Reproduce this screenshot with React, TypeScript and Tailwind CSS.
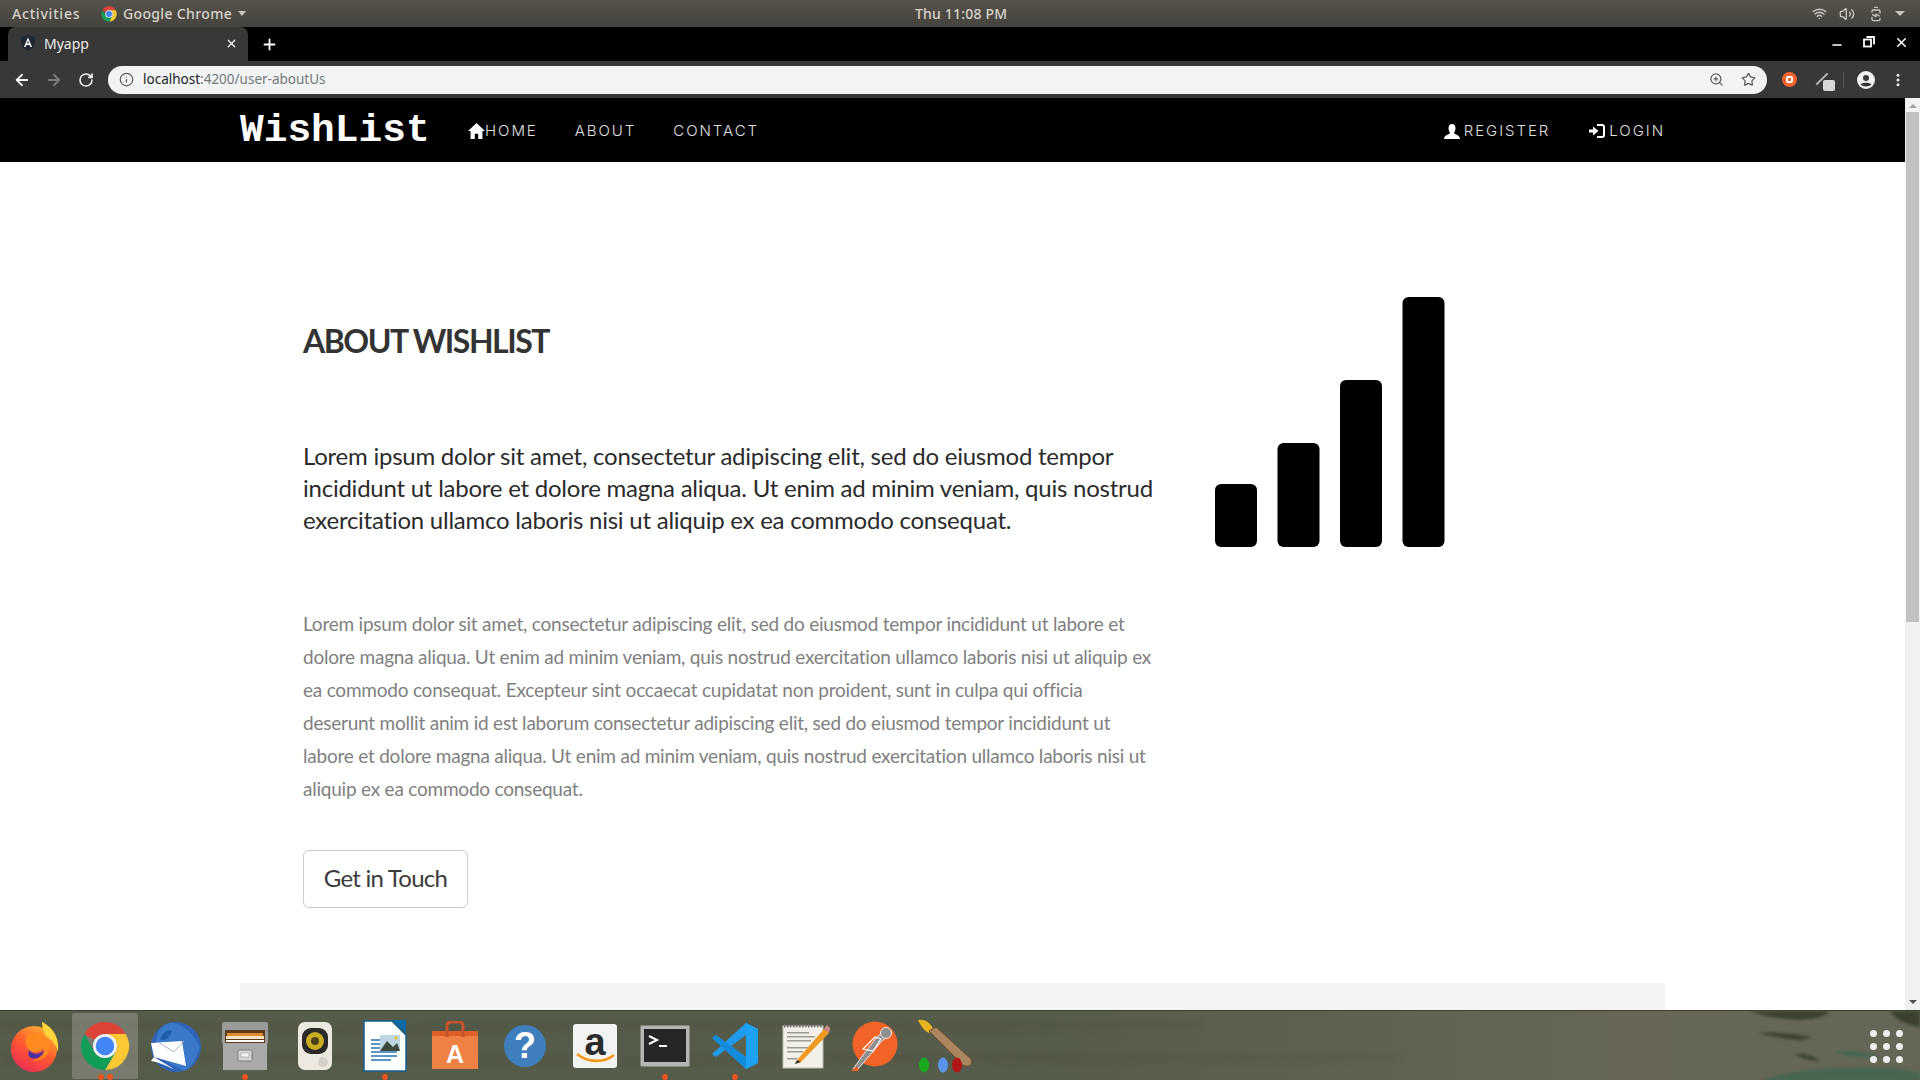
import React from "react";
import { ArrowLeft, ArrowRight, RotateCw, Info, ZoomIn, Star, X, Plus, Minus, EllipsisVertical, Wifi, Volume2, BatteryCharging } from "lucide-react";

function ChromeLogo({ size }: { size: number }) {
  return (
    <svg width={size} height={size} viewBox="0 0 100 100">
      <path d="M50 2A48 48 0 0 1 91.6 26H50A24 24 0 0 0 29 38L8.4 26A48 48 0 0 1 50 2Z" fill="#db4437" />
      <path d="M91.6 26A48 48 0 0 1 50 98L71 62A24 24 0 0 0 71 38L50 26Z" fill="#fcc934" />
      <path d="M8.4 26L29 62A24 24 0 0 0 50 74L50 74L71 62L50 98A48 48 0 0 1 8.4 26Z" fill="#0f9d58" />
      <circle cx="50" cy="50" r="24" fill="#f1f3f4" />
      <circle cx="50" cy="50" r="18.5" fill="#4285f4" />
    </svg>
  );
}

function Firefox() {
  return (
    <svg width="52" height="52" viewBox="0 0 52 52">
      <defs>
        <linearGradient id="ff" x1="0.8" y1="0" x2="0.2" y2="1">
          <stop offset="0" stopColor="#ffb52e" />
          <stop offset="0.5" stopColor="#ff5a2e" />
          <stop offset="1" stopColor="#ec2a5a" />
        </linearGradient>
      </defs>
      <circle cx="25" cy="29" r="23" fill="url(#ff)" />
      <path d="M33 2C42 6 51 16 49 32C47 24 42 19 37 16C34 11 33 6 33 2Z" fill="#ffd43b" />
      <path d="M18 16C26 9 38 14 41 26C41 36 32 42 23 41C32 39 37 34 34 28C30 34 20 33 18 27C15 22 17 19 18 16Z" fill="#ff8a1f" />
      <path d="M20 30C24 35 30 35 35 30C34 36 28 40 22 38C19 36 19 33 20 30Z" fill="#4a2fa0" />
    </svg>
  );
}

function Thunderbird() {
  return (
    <svg width="54" height="54" viewBox="0 0 54 54">
      <circle cx="28" cy="28" r="25" fill="#2f63b8" />
      <path d="M8 24C8 10 18 2 26 4C34 6 44 12 52 28C48 42 42 50 36 52L10 38Z" fill="#3a78c8" />
      <path d="M12 20C15 12 22 10 24 12C22 18 16 24 12 20Z" fill="#1c5ea8" />
      <path d="M3 24L34 22L38 47L6 38Z" fill="#ffffff" />
      <path d="M10 23L26 33L36 22" fill="none" stroke="#a8b4c0" strokeWidth="1" />
      <path d="M3 42C14 44 20 48 26 50L6 38Z" fill="#ffffff" />
    </svg>
  );
}

function FileCabinet() {
  return (
    <svg width="48" height="50" viewBox="0 0 48 50">
      <rect x="1" y="1" width="46" height="22" rx="2" fill="#9a9a9a" />
      <rect x="4" y="9" width="40" height="13" fill="#5c3a1c" />
      <rect x="6" y="12" width="36" height="3" fill="#e08a30" />
      <rect x="5" y="15" width="38" height="3" fill="#f6e2c0" />
      <rect x="5" y="19" width="38" height="2" fill="#ffffff" />
      <rect x="2" y="22" width="44" height="27" fill="#a9a9a9" />
      <rect x="17" y="29" width="14" height="11" rx="1.5" fill="#d5d5d5" stroke="#7a7a7a" />
      <rect x="20" y="32" width="8" height="4" fill="#f4f4f4" stroke="#8a8a8a" strokeWidth="0.5" />
    </svg>
  );
}

function Speaker() {
  return (
    <svg width="36" height="50" viewBox="0 0 36 50">
      <rect x="1" y="1" width="34" height="48" rx="7" fill="#ebe9e0" />
      <rect x="5" y="7" width="26" height="26" rx="9" fill="#2c2a28" />
      <circle cx="18" cy="20" r="9" fill="#c9ae23" />
      <circle cx="18" cy="20" r="4" fill="#4a4218" />
      <circle cx="26" cy="41" r="5" fill="#d4d2c8" />
    </svg>
  );
}

function DocIcon() {
  return (
    <svg width="44" height="52" viewBox="0 0 44 52">
      <path d="M1 1H29L43 15V51H1Z" fill="#ffffff" stroke="#115f8f" strokeWidth="1.5" />
      <path d="M29 0H43V13Z" fill="#0e6aa8" />
      <g fill="#5b96c4">
        <rect x="8" y="19" width="12" height="2" /><rect x="8" y="23" width="12" height="2" /><rect x="8" y="27" width="12" height="2" />
        <rect x="8" y="31" width="26" height="2" /><rect x="8" y="35" width="26" height="2" /><rect x="8" y="39" width="20" height="2" />
      </g>
      <rect x="17" y="15" width="20" height="16" fill="#bcd6e4" />
      <path d="M17 31L24 21L30 27L34 23L37 31Z" fill="#3c4a3c" />
      <circle cx="33" cy="18" r="1.5" fill="#f1c40f" />
    </svg>
  );
}

function Bag() {
  return (
    <svg width="48" height="50" viewBox="0 0 48 50">
      <path d="M1 10H47V48H1Z" fill="#ee8143" />
      <path d="M1 10H47V15H1Z" fill="#dc5f27" />
      <path d="M16 16V5C16 2 18 1 20 1H28C30 1 32 2 32 5V16" fill="none" stroke="#c6532a" strokeWidth="3" />
      <text x="24" y="42" textAnchor="middle" fontSize="25" fontWeight="700" fill="#ffffff" fontFamily="'Liberation Sans', sans-serif">A</text>
    </svg>
  );
}

function Help() {
  return (
    <div className="flex h-[42px] w-[42px] items-center justify-center rounded-full bg-[#3f7fbd] font-['Liberation_Sans',sans-serif] text-[36px] leading-none font-bold text-white">?</div>
  );
}

function Amazon() {
  return (
    <div className="relative flex h-[44px] w-[44px] justify-center rounded-[3px] bg-[#f3f3f3] font-['Liberation_Sans',sans-serif] text-[38px] leading-[36px] font-bold text-[#2b2b2b]">
      a
      <svg className="absolute bottom-[4px] left-[3px]" width="40" height="12" viewBox="0 0 40 12">
        <path d="M1 2C12 11 28 11 38 3" fill="none" stroke="#f59a1b" strokeWidth="2.6" />
      </svg>
    </div>
  );
}

function Terminal() {
  return (
    <svg width="50" height="42" viewBox="0 0 50 42">
      <rect x="0.5" y="0.5" width="49" height="41" rx="1" fill="#b5b5b5" />
      <rect x="4" y="4" width="42" height="33" fill="#262626" />
      <path d="M9 11L17 15L9 19" fill="none" stroke="#ffffff" strokeWidth="2" />
      <rect x="19" y="20" width="8" height="2" fill="#ffffff" />
    </svg>
  );
}

function VSCode() {
  return (
    <svg width="48" height="48" viewBox="0 0 48 48">
      <path d="M35 1L47 7V41L35 47L14 28L5 35L1 32L10 24L1 16L5 13L14 20Z" fill="#1f9cf0" />
      <path d="M35 1V47L47 41V7Z" fill="#1da1f2" />
      <path d="M35 13L20 24L35 35Z" fill="#5b6350" />
      <path d="M1 16L5 13L35 35V47Z" fill="#0b7fcc" opacity="0.55" />
    </svg>
  );
}

function Gedit() {
  return (
    <svg width="50" height="48" viewBox="0 0 50 48">
      <rect x="3" y="4" width="40" height="42" fill="#f2f0e8" stroke="#bdbdb0" />
      <path d="M4 4H42" stroke="#777" strokeWidth="3" strokeDasharray="1.5 1.5" />
      <g fill="#9b9b92">
        <rect x="7" y="10" width="22" height="1.5" /><rect x="7" y="14" width="28" height="1.5" /><rect x="7" y="18" width="24" height="1.5" />
        <rect x="7" y="25" width="22" height="1.5" /><rect x="7" y="29" width="16" height="1.5" /><rect x="7" y="36" width="10" height="1.5" />
      </g>
      <path d="M17 38L44 7L49 11L21 40L15 42Z" fill="#f09a22" />
      <path d="M15 42L17 38L21 40Z" fill="#333" />
      <path d="M44 7L47 3L50 6L49 11Z" fill="#d58a8a" />
    </svg>
  );
}

function Postman() {
  return (
    <svg width="48" height="50" viewBox="0 0 48 50">
      <circle cx="24" cy="23" r="22.5" fill="#f26327" />
      <path d="M2 48L12 34L26 16L37 7L41 11L30 21L14 40L6 49Z" fill="#8f8f8f" stroke="#ffffff" strokeWidth="0.8" />
      <circle cx="35" cy="12" r="5.5" fill="#8f8f8f" stroke="#ffffff" strokeWidth="0.8" />
      <path d="M12 28L24 16L30 18L22 30Z" fill="none" stroke="#ffffff" strokeWidth="1.2" />
      <path d="M0 50L6 45L8 50Z" fill="#f26327" />
    </svg>
  );
}

function Brush() {
  return (
    <svg width="58" height="54" viewBox="0 0 58 54">
      <path d="M2 1C8 0 14 3 17 10L13 14C8 12 5 7 2 1Z" fill="#e9b21f" />
      <path d="M13 12L20 8L55 40C58 46 52 49 47 46Z" fill="#a98560" stroke="#6f4b2d" strokeWidth="1" />
      <ellipse cx="8" cy="46" rx="5" ry="7.5" fill="#19a81f" />
      <ellipse cx="27" cy="46" rx="5" ry="7.5" fill="#5a94e8" />
      <ellipse cx="41" cy="46" rx="5" ry="7.5" fill="#b31616" />
    </svg>
  );
}

function Dot() {
  return <span className="h-[6px] w-[6px] rounded-full bg-[#e95420]" />;
}

function DockItem({ children, dots = 0, active = false }: { children: React.ReactNode; dots?: number; active?: boolean }) {
  return (
    <div className="relative flex h-[66px] w-[70px] items-center justify-center">
      {active && <div className="absolute top-0 left-[2px] h-[66px] w-[66px] rounded-[2px] bg-white/20" />}
      <div className="relative flex items-center justify-center">{children}</div>
      {dots > 0 && (
        <div className="absolute bottom-[-1px] left-0 flex w-full justify-center gap-[3px]">
          {Array.from({ length: dots }).map((_, i) => (
            <Dot key={i} />
          ))}
        </div>
      )}
    </div>
  );
}

function DockTexture() {
  return (
    <svg className="absolute inset-0" width="1920" height="70" viewBox="0 0 1920 70">
      <defs>
        <linearGradient id="dockbg" x1="0" y1="0" x2="1" y2="0">
          <stop offset="0" stopColor="#565c4a" />
          <stop offset="0.55" stopColor="#565c4a" />
          <stop offset="0.85" stopColor="#686757" />
          <stop offset="1" stopColor="#656656" />
        </linearGradient>
        <filter id="soft"><feGaussianBlur stdDeviation="1.6" /></filter>
        <filter id="softer"><feGaussianBlur stdDeviation="3" /></filter>
      </defs>
      <rect width="1920" height="70" fill="url(#dockbg)" />
      <g fill="#484d3e" opacity="0.45" filter="url(#softer)">
        <path d="M0 14C200 8 320 20 520 14C720 8 900 18 1200 12V15C900 22 700 14 520 19C320 25 200 14 0 18Z" />
        <path d="M0 46C300 40 500 52 800 46C1000 42 1200 50 1400 44V47C1200 54 1000 47 800 50C500 56 300 46 0 50Z" />
      </g>
      <g fill="#2d3622" opacity="0.75" filter="url(#soft)">
        <path d="M1750 0H1830C1825 6 1815 8 1808 8C1800 10 1770 8 1750 0Z" />
        <path d="M1758 22C1775 20 1800 24 1812 26C1800 32 1785 28 1758 22Z" />
        <path d="M1795 43C1805 42 1815 46 1820 50C1810 50 1800 47 1795 43Z" />
        <path d="M1890 0H1920V16C1905 14 1895 8 1890 0Z" />
      </g>
      <g fill="#3f6650" opacity="0.8" filter="url(#soft)">
        <path d="M1760 70C1790 58 1850 54 1900 58L1920 62V70Z" />
        <path d="M1835 41C1850 38 1870 42 1880 46C1860 48 1845 46 1835 41Z" />
      </g>
    </svg>
  );
}

export default function App() {
  const nav = "font-['Inter',sans-serif] text-[15px] font-light tracking-[1.95px] text-[#e0e0e0]";
  return (
    <div className="flex h-[1080px] w-[1920px] flex-col overflow-hidden bg-white font-['Lato',sans-serif]">
      {/* GNOME top bar */}
      <div className="flex h-[27px] shrink-0 items-center bg-gradient-to-b from-[#55524b] to-[#45433d] font-['Noto_Sans',sans-serif] text-[14px] font-medium text-[#d6d3cc]">
        <span className="ml-[12px] w-[89px] tracking-[0.8px]">Activities</span>
        <ChromeLogo size={16} />
        <span className="ml-[6px] tracking-[0.35px]">Google Chrome</span>
        <span className="ml-[6px] h-0 w-0 border-x-[4px] border-t-[5px] border-x-transparent border-t-[#c8c5be]" />
        <span className="ml-[660px] w-[110px] text-center text-[14px] tracking-[0.2px]">Thu 11:08 PM</span>
        <div className="ml-auto flex items-center text-[#c9c7c0]">
          <Wifi size={15} strokeWidth={2.4} />
          <Volume2 size={16} strokeWidth={2} className="ml-[12px]" />
          <BatteryCharging size={16} strokeWidth={2} className="ml-[13px] -rotate-90" />
          <span className="mr-[15px] ml-[11px] h-0 w-0 border-x-[5px] border-t-[5px] border-x-transparent border-t-[#c8c5be]" />
        </div>
      </div>

      {/* Tab strip */}
      <div className="flex h-[34px] shrink-0 items-end bg-black">
        <div className="ml-[8px] flex h-[34px] w-[240px] items-center rounded-t-[8px] bg-[#383838] pr-[10px] pb-[2px] pl-[12px] font-['Noto_Sans',sans-serif] text-[14px] text-[#eeeeee]">
          <svg width="16" height="16" viewBox="0 0 16 16">
            <path d="M8 0L15 2.5L14 12L8 16L2 12L1 2.5Z" fill="#1f2630" />
            <path d="M8 2.5L4 12H5.6L6.4 10H9.6L10.4 12H12ZM7 8.6L8 5.6L9 8.6Z" fill="#ffffff" />
          </svg>
          <span className="ml-[8px]">Myapp</span>
          <X size={13} strokeWidth={2.6} className="ml-auto" />
        </div>
        <Plus size={17} strokeWidth={2.6} className="mb-[8px] ml-[13px] text-white" />
        <div className="mb-[9px] ml-auto flex items-center text-white">
          <Minus size={14} strokeWidth={2.4} className="mt-[6px] mr-[2px]" />
          <svg className="ml-[17px]" width="12" height="12" viewBox="0 0 12 12" fill="none" stroke="#ffffff" strokeWidth="1.8">
            <rect x="1" y="3.500" width="7" height="7" />
            <path d="M3.500 1H11V8.500" />
          </svg>
          <X size={15} strokeWidth={2.4} className="mr-[11px] ml-[19px]" />
        </div>
      </div>

      {/* Toolbar */}
      <div className="flex h-[37px] shrink-0 items-center bg-[#383838]">
        <ArrowLeft size={18} strokeWidth={2.4} className="ml-[13px] text-[#f0f0f0]" />
        <ArrowRight size={18} strokeWidth={2.4} className="ml-[14px] text-[#7c7c7c]" />
        <RotateCw size={16} strokeWidth={2.4} className="ml-[15px] text-[#f0f0f0]" />
        <div className="ml-[14px] flex h-[28px] w-[1659px] items-center rounded-full bg-[#f1f3f4] pr-[11px] pl-[11px]">
          <Info size={15} strokeWidth={2} className="text-[#5c5f62]" />
          <span className="ml-[9px] font-['Noto_Sans',sans-serif] text-[13.5px] text-[#202124]">
            localhost<span className="text-[#74777b]">:4200/user-aboutUs</span>
          </span>
          <ZoomIn size={15} strokeWidth={2} className="ml-auto text-[#5c5f62]" />
          <Star size={15} strokeWidth={2} className="ml-[17px] text-[#5c5f62]" />
        </div>
        <div className="ml-[15px] flex h-[15px] w-[15px] items-center justify-center rounded-full bg-[#f4642b]">
          <div className="h-[7px] w-[7px] rounded-[2px] border-[2px] border-white" />
        </div>
        <div className="relative ml-[17px] h-[22px] w-[22px]">
          <div className="absolute top-[9px] left-0 h-[2px] w-[16px] -rotate-45 bg-[#b8b8b8]" />
          <div className="absolute right-[1px] bottom-0 h-[11px] w-[12px] rounded-[2px] bg-[#d8d8d8]" />
        </div>
        <div className="ml-[7px] h-[16px] w-px bg-[#5a5a5a]" />
        <svg className="ml-[13px]" width="18" height="18" viewBox="0 0 18 18">
          <circle cx="9" cy="9" r="9" fill="#f2f2f2" />
          <circle cx="9" cy="7" r="3" fill="#383838" />
          <path d="M3.500 13.500C5 11 13 11 14.500 13.500C12 16 6 16 3.500 13.500Z" fill="#383838" />
        </svg>
        <EllipsisVertical size={16} strokeWidth={2.6} className="ml-[15px] text-[#ececec]" />
      </div>

      {/* Viewport with page and scrollbar */}
      <div className="flex h-[912px] shrink-0">
        <div className="w-[1905px] overflow-hidden">
          <header className="flex h-[64px] items-center bg-black pt-[2px] pr-[240px] pl-[240px]">
            <span className="w-[228px] shrink-0 font-['Liberation_Mono',monospace] text-[39.5px] leading-none font-bold text-white">WishList</span>
            <span className="flex items-center">
              <svg width="17" height="16" viewBox="0 0 16 15" fill="#ffffff">
                <path d="M8 0L16 7.500H13.600V15H9.600V10H6.400V15H2.400V7.500H0Z" />
              </svg>
              <span className={nav}>HOME</span>
            </span>
            <span className={`ml-[37px] ${nav}`}>ABOUT</span>
            <span className={`ml-[37px] ${nav}`}>CONTACT</span>
            <span className="ml-auto flex items-center">
              <svg width="16" height="15" viewBox="0 0 16 15" fill="#ffffff">
                <path d="M8 0C10.500 0 11.500 2 11.500 4.500C11.500 6.800 10.300 8.300 10 9C10.500 10.500 16 11 16 15H0C0 11 5.500 10.500 6 9C5.700 8.300 4.500 6.800 4.500 4.500C4.500 2 5.500 0 8 0Z" />
              </svg>
              <span className={`ml-[4px] ${nav}`}>REGISTER</span>
            </span>
            <span className="ml-[39px] flex items-center">
              <svg width="16" height="14" viewBox="0 0 16 14" fill="#ffffff">
                <path d="M0 5.500H4V2.500L9.500 7L4 11.500V8.500H0Z" />
                <path d="M8 1H13C14.500 1 15 2 15 3V11C15 12 14.500 13 13 13H8" fill="none" stroke="#ffffff" strokeWidth="2" />
              </svg>
              <span className={`ml-[4px] ${nav}`}>LOGIN</span>
            </span>
          </header>

          <main className="flex pl-[303px]">
            <div className="w-[855px] shrink-0 pt-[160px]">
              <h1 className="text-[32px] leading-[38px] font-bold tracking-[-1.5px] text-[#333333]">ABOUT WISHLIST</h1>
              <p className="mt-[80px] text-[24px] leading-[32px] tracking-[-0.24px] text-[#2b2b2b]">
                Lorem ipsum dolor sit amet, consectetur adipiscing elit, sed do eiusmod tempor incididunt ut labore et dolore magna aliqua. Ut enim ad minim veniam, quis nostrud exercitation ullamco laboris nisi ut aliquip ex ea commodo consequat.
              </p>
              <p className="mt-[71px] text-[19px] leading-[33px] tracking-[-0.22px] text-[#808080]">
                Lorem ipsum dolor sit amet, consectetur adipiscing elit, sed do eiusmod tempor incididunt ut labore et dolore magna aliqua. Ut enim ad minim veniam, quis nostrud exercitation ullamco laboris nisi ut aliquip ex ea commodo consequat. Excepteur sint occaecat cupidatat non proident, sunt in culpa qui officia deserunt mollit anim id est laborum consectetur adipiscing elit, sed do eiusmod tempor incididunt ut labore et dolore magna aliqua. Ut enim ad minim veniam, quis nostrud exercitation ullamco laboris nisi ut aliquip ex ea commodo consequat.
              </p>
              <button className="mt-[45px] flex h-[58px] w-[165px] items-center justify-center rounded-[6px] border border-[#cccccc] bg-white pb-[3px] text-[24px] tracking-[-0.75px] text-[#3b3b3b]">
                Get in Touch
              </button>
            </div>
            <div className="ml-[57px] pt-[135px]">
              <svg width="230" height="250" viewBox="0 0 230 250" fill="#000000">
                <rect x="0" y="187" width="42" height="63" rx="6" />
                <rect x="62.500" y="146" width="42" height="104" rx="6" />
                <rect x="125" y="83" width="42" height="167" rx="6" />
                <rect x="187.500" y="0" width="42" height="250" rx="6" />
              </svg>
            </div>
          </main>
          <div className="mt-[75px] ml-[240px] h-[40px] w-[1425px] bg-[#f4f4f4]" />
        </div>
        <div className="flex w-[15px] flex-col items-center bg-[#f1f1f1]">
          <span className="mt-[6px] h-0 w-0 border-x-[4px] border-b-[4px] border-x-transparent border-b-[#a3a3a3]" />
          <div className="mt-[4px] h-[510px] w-[13px] bg-[#c1c1c1]" />
          <span className="mt-auto mb-[6px] h-0 w-0 border-x-[4px] border-t-[4px] border-x-transparent border-t-[#505050]" />
        </div>
      </div>

      {/* Dock */}
      <div className="relative h-[70px] shrink-0 overflow-hidden border-t border-[#3d3f36]">
        <DockTexture />
        <div className="relative flex items-center pt-[2px]">
          <DockItem><Firefox /></DockItem>
          <DockItem active dots={2}><ChromeLogo size={50} /></DockItem>
          <DockItem><Thunderbird /></DockItem>
          <DockItem dots={1}><FileCabinet /></DockItem>
          <DockItem><Speaker /></DockItem>
          <DockItem dots={1}><DocIcon /></DockItem>
          <DockItem><Bag /></DockItem>
          <DockItem><Help /></DockItem>
          <DockItem><Amazon /></DockItem>
          <DockItem dots={1}><Terminal /></DockItem>
          <DockItem dots={1}><VSCode /></DockItem>
          <DockItem><Gedit /></DockItem>
          <DockItem><Postman /></DockItem>
          <DockItem><Brush /></DockItem>
          <div className="mr-[17px] ml-auto grid grid-cols-3 gap-x-[6px] gap-y-[6px]">
            {Array.from({ length: 9 }).map((_, i) => (
              <span key={i} className="h-[7px] w-[7px] rounded-full bg-[#eeeeee]" />
            ))}
          </div>
        </div>
      </div>
    </div>
  );
}
